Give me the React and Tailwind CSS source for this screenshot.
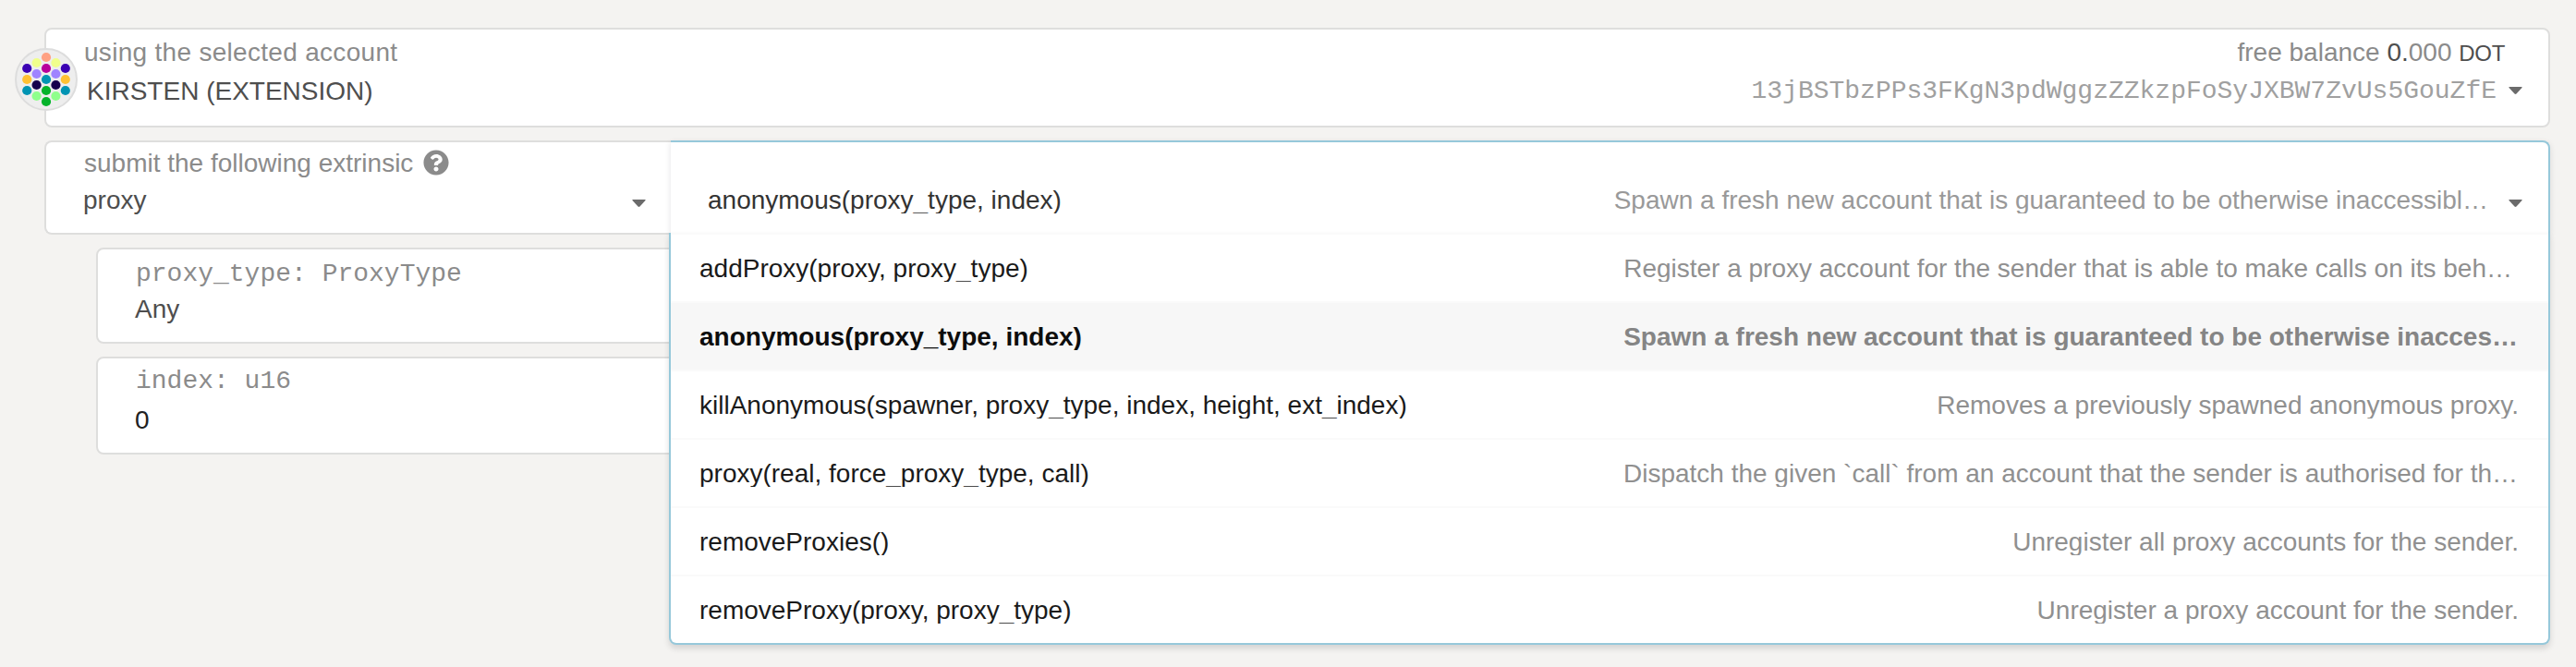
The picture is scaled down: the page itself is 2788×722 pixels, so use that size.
import { FaQuestionCircle } from "react-icons/fa";

const sans = "font-['Liberation_Sans',sans-serif]";
const mono = "font-['Liberation_Mono',monospace]";

const calls = [
  ["addProxy(proxy, proxy_type)", "Register a proxy account for the sender that is able to make calls on its beh…", "mr-[8px]"],
  ["anonymous(proxy_type, index)", "Spawn a fresh new account that is guaranteed to be otherwise inacces…", "mr-[2px]"],
  ["killAnonymous(spawner, proxy_type, index, height, ext_index)", "Removes a previously spawned anonymous proxy.", "mr-px"],
  ["proxy(real, force_proxy_type, call)", "Dispatch the given `call` from an account that the sender is authorised for th…", "mr-[2px]"],
  ["removeProxies()", "Unregister all proxy accounts for the sender.", "mr-px"],
  ["removeProxy(proxy, proxy_type)", "Unregister a proxy account for the sender.", "mr-px"],
];

const dots = [
  [0, -24, "#ffa183"],
  [-10.4, -18, "#f0ff8c"], [10.4, -18, "#f0ff8c"],
  [-20.8, -12, "#3a00b3"], [0, -12, "#b8009b"], [20.8, -12, "#3a00b3"],
  [-10.4, -6, "#9f84ff"], [10.4, -6, "#9f84ff"],
  [-20.8, 0, "#ffc133"], [0, 0, "#0094b3"], [20.8, 0, "#ffc133"],
  [-10.4, 6, "#16004d"], [10.4, 6, "#16004d"],
  [-20.8, 12, "#0094b3"], [0, 12, "#05b32b"], [20.8, 12, "#0094b3"],
  [-10.4, 18, "#8fff8c"], [10.4, 18, "#8fff8c"],
  [0, 24, "#05b32b"],
];

function Identicon() {
  return (
    <svg className="absolute top-[20px] -left-[34px] h-[68px] w-[68px]" viewBox="-34 -34 68 68">
      <circle r="33" fill="#eeeeee" stroke="#dddddd" strokeWidth="2" />
      {dots.map(([x, y, fill], i) => (
        <circle key={i} cx={x} cy={y} r="5.1" fill={fill} />
      ))}
    </svg>
  );
}

function Caret({ className }) {
  return (
    <svg className={`h-[8px] w-[15px] shrink-0 ${className}`} viewBox="0 0 15 8">
      <path d="M1 0H14Q15.2 0 14.5 1.1L8.5 7.5Q7.5 8.4 6.5 7.5L.5 1.1Q-.2 0 1 0Z" fill="#6b6b6b" />
    </svg>
  );
}

export default function App() {
  return (
    <div className={`h-[722px] w-[2788px] overflow-hidden bg-[#f4f3f1] pt-[30px] pl-[48px] text-[28px] leading-[30px] whitespace-nowrap ${sans}`}>
      <section className="relative h-[108px] w-[2712px] rounded-[8px] border-2 border-[#dededd] bg-white pt-[10px]">
        <Identicon />
        <div className="flex h-[28px] justify-between pr-[47px] pl-[41px]">
          <span className="tracking-[0.3px] text-[#8b8b8b]">using the selected account</span>
          <span className="text-[#8b8b8b]">
            free balance <span className="text-[#4e4e4e]">0.</span>000 <span className="text-[24px] tracking-[-0.3px] text-[#4e4e4e]">DOT</span>
          </span>
        </div>
        <div className="mt-[14px] flex h-[28px] pr-[28px] pl-[44px]">
          <span className="flex-1 text-[#4e4e4e]">KIRSTEN (EXTENSION)</span>
          <span className={`text-[#a0a0a0] ${mono}`}>13jBSTbzPPs3FKgN3pdWggzZZkzpFoSyJXBW7ZvUs5GouZfE</span>
          <Caret className="mt-[10px] ml-[13px]" />
        </div>
      </section>

      <section className="relative mt-[14px] flex h-[102px] w-[2712px]">
        <div className="h-[102px] w-[678px] rounded-l-[8px] border-2 border-r-0 border-[#dededd] bg-white pt-[8px] pl-[40px]">
          <div className="flex h-[28px] items-start pl-px text-[#8b8b8b]">
            <span>submit the following extrinsic</span>
            <FaQuestionCircle className="ml-[11px] h-[28px] w-[28px]" />
          </div>
          <div className="mt-[12px] flex h-[28px]">
            <span className="flex-1 text-[#4e4e4e]">proxy</span>
            <Caret className="mt-[14px] mr-[27px]" />
          </div>
        </div>
        <div className="flex h-[102px] w-[2034px] rounded-tr-[8px] border-t-2 border-r-2 border-[#96c8da] bg-white pt-[48px] pr-[28px] pl-[40px] shadow-[0_2px_6px_rgba(34,36,38,0.12)]">
          <span className="h-[29px] overflow-hidden text-[#333333]">anonymous(proxy_type, index)</span>
          <span className="ml-auto h-[29px] overflow-hidden text-[#999999]">
            Spawn a fresh new account that is guaranteed to be otherwise inaccessibl…
          </span>
          <Caret className="mt-[14px] ml-[22px]" />
        </div>

        <div className="absolute top-[100px] left-[676px] z-10 h-[446px] w-[2036px] rounded-b-[8px] border-2 border-t-0 border-[#96c8da] bg-white shadow-[0_4px_6px_rgba(34,36,38,0.15)]">
          {calls.map(([name, text, shift], i) => (
            <div
              key={name}
              className={`flex h-[74px] justify-between border-t-2 border-[#fafafa] px-[31px] pt-[22px] last:rounded-b-[6px] ${
                i === 1 ? "bg-[#f7f7f7] font-bold" : ""
              }`}
            >
              <span className={`h-[29px] overflow-hidden ${i === 1 ? "text-[#0d0d0d]" : "text-[#1a1a1a]"}`}>{name}</span>
              <span className={`h-[29px] overflow-hidden ${i === 1 ? "text-[#858585]" : "text-[#909090]"} ${shift}`}>{text}</span>
            </div>
          ))}
        </div>
      </section>

      <section className="mt-[14px] ml-[56px] flex flex-col gap-[14px]">
        <div className="h-[104px] w-[2656px] rounded-[8px] border-2 border-[#dededd] bg-white pt-[12px] pl-[40px]">
          <div className={`h-[28px] pl-px text-[#8b8b8b] ${mono}`}>proxy_type: ProxyType</div>
          <div className="mt-[10px] h-[28px] text-[#4e4e4e]">Any</div>
        </div>
        <div className="h-[106px] w-[2656px] rounded-[8px] border-2 border-[#dededd] bg-white pt-[10px] pl-[40px]">
          <div className={`h-[28px] pl-px text-[#8b8b8b] ${mono}`}>index: u16</div>
          <div className="mt-[14px] h-[28px] text-[#212121]">0</div>
        </div>
      </section>
    </div>
  );
}
